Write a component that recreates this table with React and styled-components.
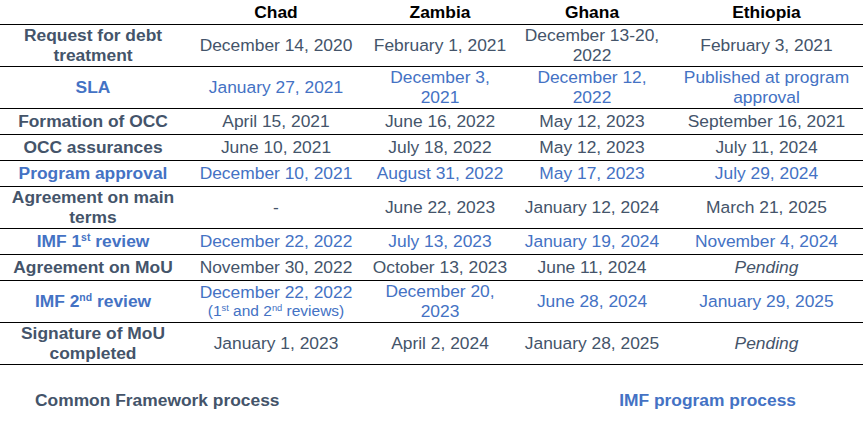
import styled, { createGlobalStyle } from 'styled-components';

const GlobalStyle = createGlobalStyle`
  html, body {
    margin: 0;
    padding: 0;
    background: #ffffff;
  }
  body {
    font-family: "Liberation Sans", Arial, sans-serif;
  }
`

const SLATE = '#44546a'
const BLUE = '#4472c4'

const Page = styled.div`
  width: 863px;
  height: 429px;
  overflow: hidden;
  font-size: 17.4px;
  line-height: 19.5px;
`

const Table = styled.div`
  display: flex;
  flex-direction: column;
`

const Row = styled.div`
  display: grid;
  grid-template-columns: 186px 180px 148px 156px 1fr;
  min-height: 25px;
  border-top: ${props => props.$head ? 'none' : '1.5px solid #000'};
  ${props => props.$last && `border-bottom: 1.5px solid #000;`}
  ${props => props.$head && `min-height: 24px;`}
`

const Cell = styled.div`
  display: flex;
  flex-direction: column;
  align-items: center;
  justify-content: center;
  text-align: center;
  padding: 1px 4px;
  color: ${props => props.$blue ? BLUE : SLATE};
  font-style: ${props => props.$italic ? 'italic' : 'normal'};
`

const Label = styled(Cell)`
  font-weight: bold;
`

const HeadCell = styled(Cell)`
  color: #000;
  font-weight: bold;
  padding-top: 3px;
`

const Note = styled.span`
  font-size: 15.5px;
  line-height: 18px;
`

const Sup = styled.sup`
  font-size: 0.6em;
  line-height: 0;
  vertical-align: 0.55em;
`

const Footer = styled.div`
  display: flex;
  justify-content: space-between;
  padding: 26px 67px 0 35px;
  font-weight: bold;
`

const FooterLabel = styled.span`
  color: ${props => props.$blue ? BLUE : SLATE};
`

const countries = ['Chad', 'Zambia', 'Ghana', 'Ethiopia']

const rows = [
  {label: 'Request for debt treatment', values: ['December 14, 2020', 'February 1, 2021', 'December 13-20, 2022', 'February 3, 2021']},
  {label: 'SLA', blue: true, values: ['January 27, 2021', 'December 3, 2021', 'December 12, 2022', 'Published at program approval']},
  {label: 'Formation of OCC', values: ['April 15, 2021', 'June 16, 2022', 'May 12, 2023', 'September 16, 2021']},
  {label: 'OCC assurances', values: ['June 10, 2021', 'July 18, 2022', 'May 12, 2023', 'July 11, 2024']},
  {label: 'Program approval', blue: true, values: ['December 10, 2021', 'August 31, 2022', 'May 17, 2023', 'July 29, 2024']},
  {label: 'Agreement on main terms', values: ['-', 'June 22, 2023', 'January 12, 2024', 'March 21, 2025']},
  {label: <span>IMF 1<Sup>st</Sup> review</span>, blue: true, values: ['December 22, 2022', 'July 13, 2023', 'January 19, 2024', 'November 4, 2024']},
  {label: 'Agreement on MoU', values: ['November 30, 2022', 'October 13, 2023', 'June 11, 2024', 'Pending']},
  {
    label: <span>IMF 2<Sup>nd</Sup> review</span>,
    blue: true,
    values: [
      <>
        <span>December 22, 2022</span>
        <Note>(1<Sup>st</Sup> and 2<Sup>nd</Sup> reviews)</Note>
      </>,
      'December 20, 2023',
      'June 28, 2024',
      'January 29, 2025',
    ],
  },
  {label: 'Signature of MoU completed', values: ['January 1, 2023', 'April 2, 2024', 'January 28, 2025', 'Pending']},
]

export default function App () {
  return (
    <Page>
      <GlobalStyle />
      <Table>
        <Row $head>
          <HeadCell />
          {countries.map(c => <HeadCell key={c}>{c}</HeadCell>)}
        </Row>
        {rows.map((row, i) => (
          <Row key={i} $last={i === rows.length - 1}>
            <Label $blue={row.blue}>{row.label}</Label>
            {row.values.map((v, j) => (
              <Cell key={j} $blue={row.blue} $italic={v === 'Pending'}>{v}</Cell>
            ))}
          </Row>
        ))}
      </Table>
      <Footer>
        <FooterLabel>Common Framework process</FooterLabel>
        <FooterLabel $blue>IMF program process</FooterLabel>
      </Footer>
    </Page>
  )
}
